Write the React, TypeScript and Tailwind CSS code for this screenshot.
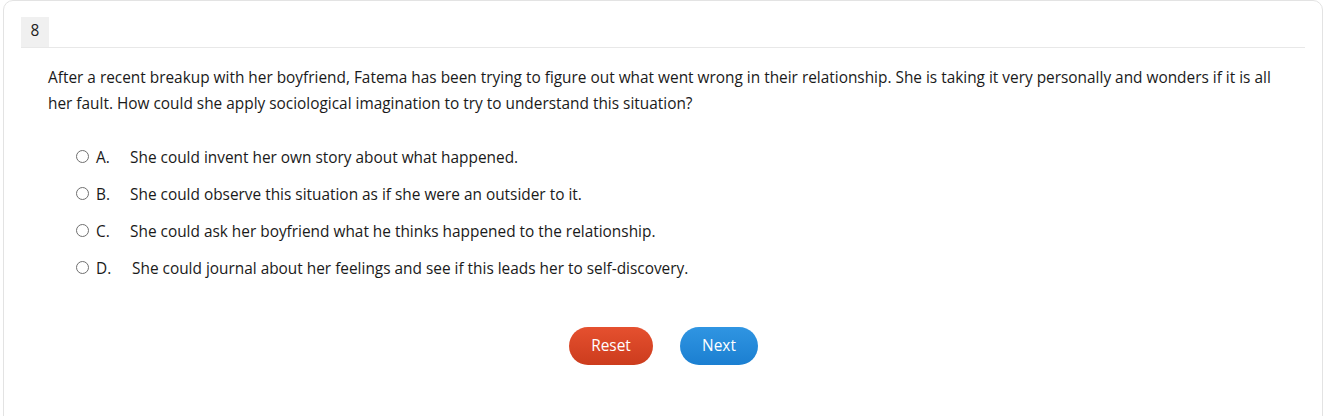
import React from "react";

const options = [
  { l: "A.", t: "She could invent her own story about what happened." },
  { l: "B.", t: "She could observe this situation as if she were an outsider to it." },
  { l: "C.", t: "She could ask her boyfriend what he thinks happened to the relationship." },
  { l: "D.", t: "She could journal about her feelings and see if this leads her to self-discovery." },
];

export default function App() {
  return (
    <div className="w-[1326px] h-[416px] bg-white overflow-hidden" style={{ fontFamily: '"Open Sans", sans-serif' }}>
      <div className="mx-[3px] h-[430px] border border-[#e3e3e3] rounded-t-[10px] bg-white pt-[16px] px-[17px] text-[#1a1a1a]">
        <div className="border-b border-[#e8e8e8] flex">
          <div className="w-[28px] h-[30px] pb-[3px] bg-[#f0f0f0] flex items-center justify-center text-[15.4px] text-[#222]">8</div>
        </div>
        <div className="pl-[27px] pr-[20px] pt-[17px] text-[15.4px] leading-[26px]">
          After a recent breakup with her boyfriend, Fatema has been trying to figure out what went wrong in their relationship. She is taking it very personally and wonders if it is all her fault. How could she apply sociological imagination to try to understand this situation?
        </div>
        <div className="pl-[55px] pt-[30px] flex flex-col gap-[15px]">
          {options.map((o, i) => (
            <div key={o.l} className="flex items-center h-[22px] text-[15.4px]">
              <span className="w-[13px] h-[13px] rounded-full border border-[#6f6f6f] bg-white mr-[7px] -mt-[3px]" />
              <span className="w-[34px]">{o.l}</span>
              <span className={i === 3 ? "ml-[2px]" : ""}>{o.t}</span>
            </div>
          ))}
        </div>
        <div className="flex justify-center gap-[27px] pt-[47px] pl-[1px]">
          <button className="w-[84px] h-[38px] rounded-full bg-gradient-to-b from-[#e5502f] to-[#cc3c1d] text-white text-[15.4px] font-medium">Reset</button>
          <button className="w-[78px] h-[38px] rounded-full bg-gradient-to-b from-[#2f95e2] to-[#1b7fd1] text-white text-[15.4px] font-medium">Next</button>
        </div>
      </div>
    </div>
  );
}
